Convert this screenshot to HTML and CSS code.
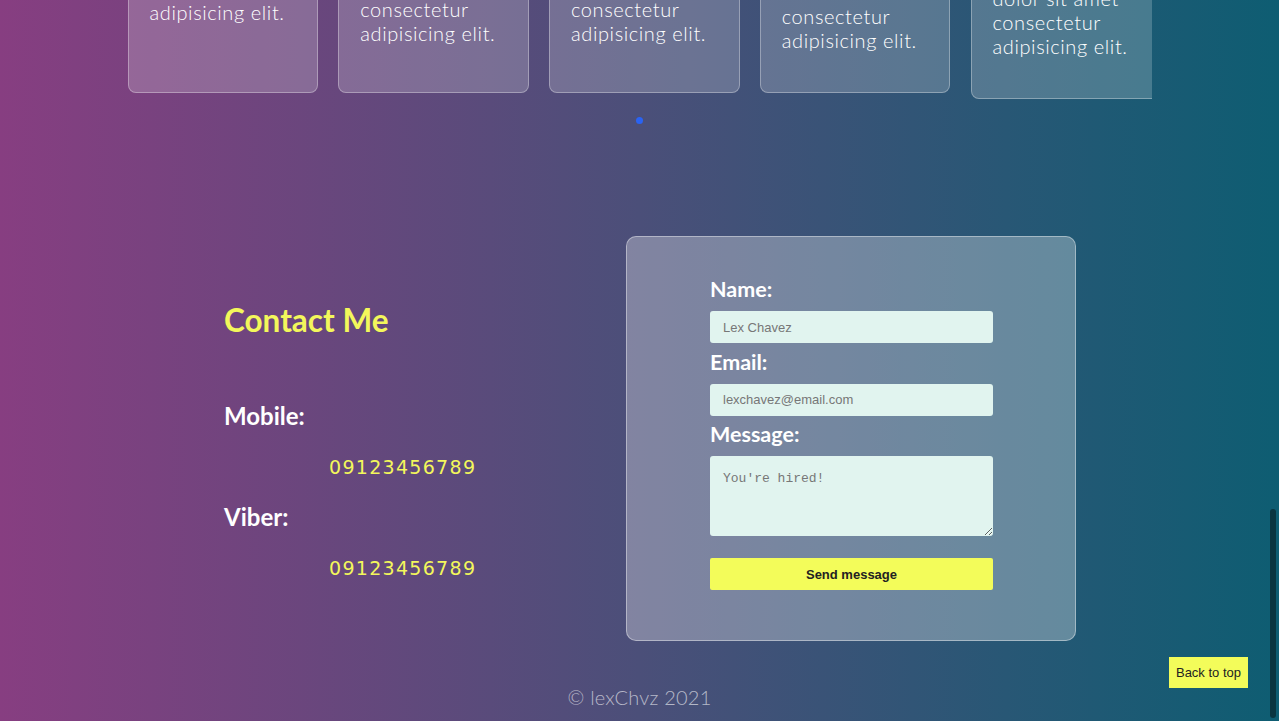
FILE: index.html
```html
<!DOCTYPE html>
<html lang="en">
<head>
<meta charset="utf-8">
<title>lexChvz</title>
<link rel="stylesheet" href="styles.css">
</head>
<body>
<main class="page">
  <section class="projects">
    <div class="carousel">
      <article class="card card--a"><p>Lorem ipsum dolor sit<br>amet consectetur<br>adipisicing elit.</p></article>
      <article class="card card--b"><p>Lorem ipsum<br>dolor sit amet<br>consectetur<br>adipisicing elit.</p></article>
      <article class="card card--b"><p>Lorem ipsum<br>dolor sit amet<br>consectetur<br>adipisicing elit.</p></article>
      <article class="card card--c"><p>Lorem ipsum<br>dolor sit amet<br>consectetur<br>adipisicing elit.</p></article>
      <article class="card card--d"><p>Lorem ipsum<br>dolor sit amet<br>consectetur<br>adipisicing elit.</p></article>
    </div>
    <div class="dots"><span class="dot"></span></div>
  </section>

  <section class="contact">
    <div class="contact-info">
      <h2 class="contact-title">Contact Me</h2>
      <h3 class="contact-label">Mobile:</h3>
      <p class="contact-number">09123456789</p>
      <h3 class="contact-label">Viber:</h3>
      <p class="contact-number">09123456789</p>
    </div>
    <div class="form-card">
      <form class="form">
        <label class="form-label" for="name">Name:</label>
        <input class="form-input" id="name" type="text" placeholder="Lex Chavez">
        <label class="form-label" for="email">Email:</label>
        <input class="form-input" id="email" type="email" placeholder="lexchavez@email.com">
        <label class="form-label" for="msg">Message:</label>
        <textarea class="form-textarea" id="msg" placeholder="You're hired!"></textarea>
        <button class="form-button" type="button">Send message</button>
      </form>
    </div>
  </section>

  <footer class="footer">© lexChvz 2021</footer>
</main>
<a class="back-top" href="#">Back to top</a>
<div class="scroll-thumb"></div>
</body>
</html>
```

FILE: styles.css
```css
* { box-sizing: border-box; }

html, body {
  margin: 0;
  height: 100%;
  overflow: hidden;
}

body {
  background: linear-gradient(to right, #873e81 0%, #4b4f79 50%, #0e5d72 100%);
  font-family: "Lato", "Open Sans", sans-serif;
  color: #fff;
}

.page {
  display: flex;
  flex-direction: column;
}

/* Projects carousel */
.projects {
  margin-top: -127px;
  display: flex;
  flex-direction: column;
  align-items: center;
}

.carousel {
  width: 1024px;
  display: flex;
  align-items: flex-start;
  gap: 20.25px;
  overflow: hidden;
}

.card {
  flex: 0 0 190.5px;
  height: 220px;
  display: flex;
  flex-direction: column;
  justify-content: flex-end;
  padding: 0 21px;
  background: rgba(255, 255, 255, 0.2);
  border: 1px solid rgba(255, 255, 255, 0.32);
  border-radius: 8px;
  overflow: hidden;
}

.card p {
  margin: 0;
  font-size: 20px;
  font-weight: 300;
  line-height: 24px;
  letter-spacing: 0.6px;
  white-space: nowrap;
}

.card--a { padding-bottom: 68px; }
.card--b { padding-bottom: 47px; }
.card--c { padding-bottom: 40px; }
.card--d { flex-basis: 200px; height: 226px; padding-bottom: 40px; }

.dots {
  margin-top: 18px;
  display: flex;
  justify-content: center;
}

.dot {
  width: 7px;
  height: 7px;
  border-radius: 50%;
  background: #2a63f2;
}

/* Contact */
.contact {
  margin-top: 112px;
  display: flex;
  align-items: center;
  padding-left: 224px;
}

.contact-info {
  width: 402px;
  padding-top: 5px;
  display: flex;
  flex-direction: column;
}

.contact-title {
  margin: 0 0 65px;
  font-size: 31.5px;
  line-height: 36px;
  font-weight: 700;
  color: #f3f75b;
}

.contact-label {
  margin: 0;
  font-size: 24px;
  line-height: 26px;
  font-weight: 700;
}

.contact-number {
  margin: 26px 0 25px 105px;
  font-family: "DejaVu Sans", sans-serif;
  font-size: 19px;
  line-height: 24px;
  letter-spacing: 1.3px;
  color: #f3f75b;
}

.contact-number:last-child { margin-bottom: 0; }

.form-card {
  width: 450px;
  padding: 40px 82px 50px 83px;
  background: rgba(255, 255, 255, 0.3);
  border: 1px solid rgba(255, 255, 255, 0.4);
  border-radius: 10px;
}

.form {
  display: flex;
  flex-direction: column;
}

.form-label {
  font-size: 21.5px;
  line-height: 24px;
  font-weight: 700;
  margin-bottom: 10px;
}

.form-input,
.form-textarea {
  width: 283px;
  border: none;
  border-radius: 3px;
  background: #e1f4ef;
  color: #333;
  font-size: 13px;
  outline: none;
}

.form-input {
  height: 32px;
  padding: 0 13px;
  margin-bottom: 6.5px;
  font-family: "Liberation Sans", Arial, sans-serif;
}

.form-textarea {
  height: 80px;
  padding: 15px 13px;
  font-family: "Liberation Mono", monospace;
  resize: vertical;
}

.form-input::placeholder,
.form-textarea::placeholder { color: #777; }

.form-button {
  margin-top: 22px;
  width: 283px;
  height: 32px;
  border: none;
  border-radius: 2px;
  background: #f3fc5a;
  color: #222;
  font-family: "Liberation Sans", Arial, sans-serif;
  font-size: 13px;
  font-weight: 700;
}

.footer {
  margin-top: 44px;
  text-align: center;
  font-size: 20px;
  line-height: 24px;
  font-weight: 300;
  letter-spacing: 0.2px;
  color: rgba(255, 255, 255, 0.6);
}

.back-top {
  position: fixed;
  right: 31px;
  bottom: 33px;
  width: 79px;
  height: 31px;
  display: flex;
  align-items: center;
  justify-content: center;
  background: #f3fc5a;
  color: #222;
  font-family: "Liberation Sans", Arial, sans-serif;
  font-size: 13px;
  text-decoration: none;
}

.scroll-thumb {
  position: fixed;
  right: 3px;
  top: 509px;
  bottom: 3px;
  width: 6px;
  border-radius: 3px;
  background: #0a3541;
}
```
